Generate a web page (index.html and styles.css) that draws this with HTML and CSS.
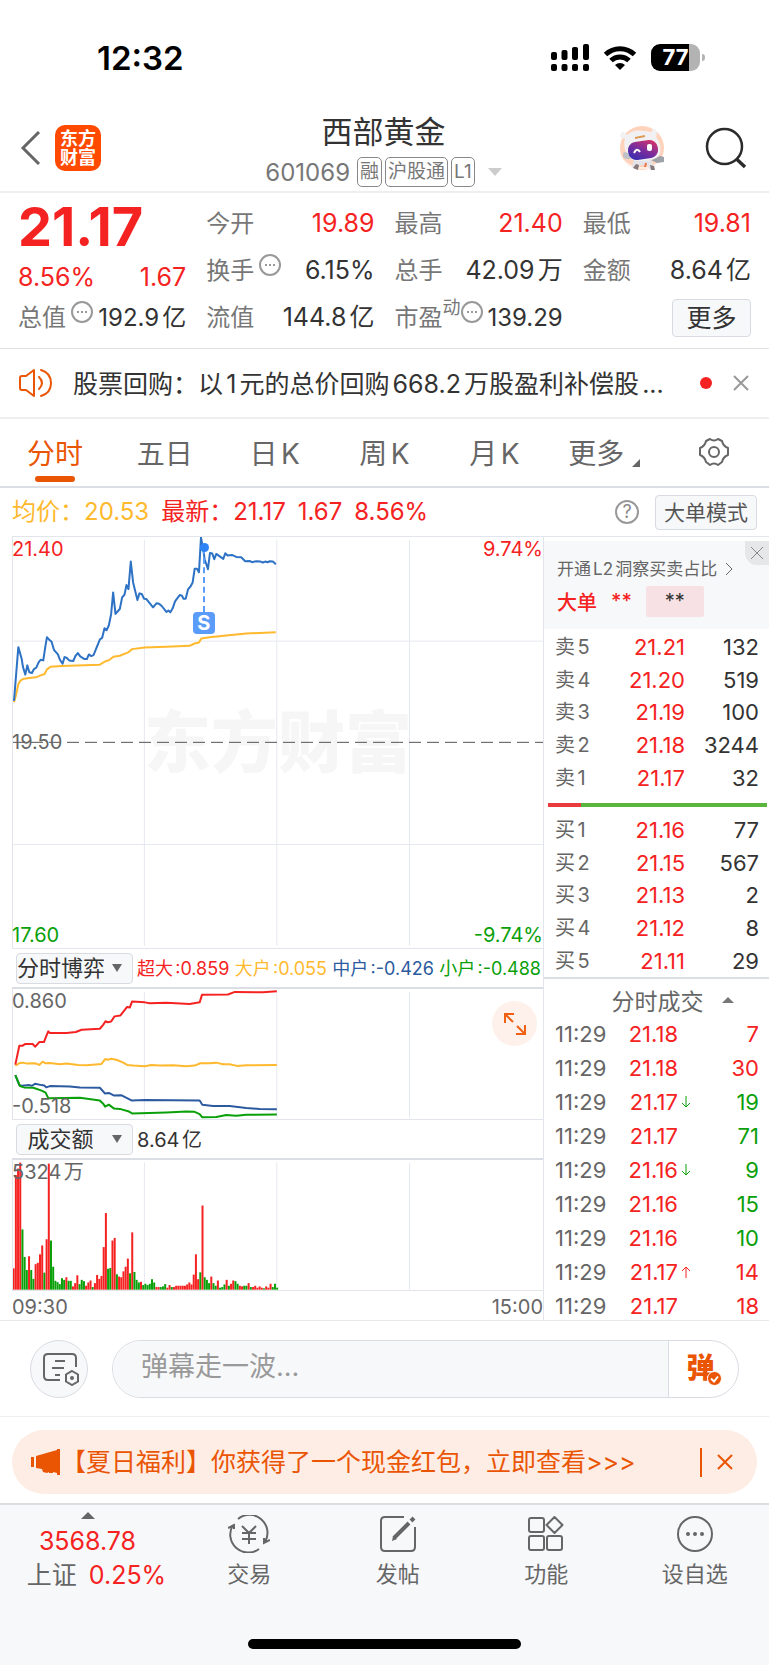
FILE: index.html
```html
<!doctype html>
<html lang="zh-CN">
  <head>
    <meta charset="UTF-8" />
    <meta name="viewport" content="width=device-width, initial-scale=1.0" />
    <title>西部黄金 601069</title>
    <link rel="stylesheet" href="styles.css">
  </head>
  <body>
    <div class="status-bar">
      <span class="clock">12:32</span>
      <div class="status-icons">
        <svg width="38" height="27" viewBox="0 0 38 27">
          <rect x="0" y="8" width="6" height="8" rx="2" />
          <rect x="10.500" y="6" width="6" height="10" rx="2" />
          <rect x="21" y="3" width="6" height="13" rx="2" />
          <rect x="32" y="0" width="6" height="16" rx="2" />
          <rect x="0" y="20" width="6" height="7" rx="2" />
          <rect x="10.500" y="20" width="6" height="7" rx="2" />
          <rect x="21" y="20" width="6" height="7" rx="2" />
          <rect x="32" y="20" width="6" height="7" rx="2" />
        </svg>
        <svg width="34" height="26" viewBox="0 0 34 26">
          <path d="M2.500 9.500a21 21 0 0 1 29 0M8 15.500a13 13 0 0 1 18 0" fill="none" stroke="#000" stroke-width="5" />
          <path d="M17 25l-5-5a7.500 7.500 0 0 1 10 0z" />
        </svg>
        <div class="battery"><span>77</span></div>
      </div>
    </div>

    <header class="header">
      <div class="header-left">
        <button class="icon-button" aria-label="返回">
          <svg width="22" height="36" viewBox="0 0 22 36"><path d="M19 2L3 18l16 16" fill="none" stroke="#666" stroke-width="3" /></svg>
        </button>
        <a class="logo" href="#">东方<br>财富</a>
      </div>
      <div class="header-title">
        <h1>西部黄金</h1>
        <div class="code">
          <span>601069</span>
          <span class="tag">融</span>
          <span class="tag">沪股通</span>
          <span class="tag">L1</span>
          <svg width="14" height="8" viewBox="0 0 14 8"><path d="M0 0h14L7 8z" fill="#ccc" /></svg>
        </div>
      </div>
      <div class="header-right">
        <button class="icon-button" aria-label="助手">
          <svg width="46" height="46" viewBox="0 0 46 46">
            <defs>
              <linearGradient id="visor" x1="0" y1="1" x2="1" y2="0">
                <stop offset="0" stop-color="#2a2fb5" />
                <stop offset="0.500" stop-color="#7b2c9c" />
                <stop offset="1" stop-color="#e8365f" />
              </linearGradient>
            </defs>
            <circle cx="23" cy="23" r="22" fill="#ffd3bb" />
            <path d="M3 33q8 9 20 9t20-9v11H3z" fill="#fff" opacity="0.600" />
            <path d="M15 34l-2 8 5 2 3-4h7l3 5 4-3-3-8z" fill="#e4e4e8" />
            <path d="M32 35l9-4 4 1v5l-7 1z" fill="#9da1a8" />
            <path d="M14 43l3-4 3 1-1 5zM31 40l4 1 1 4h-4z" fill="#85797b" />
            <path d="M1 12q1-6 4-5l3 3q6-6 17-4l8 1q0-4 3-3 3 4 1 8 6 7 4 17-4 7-17 7-14 1-17-9-3-7-1-13z" fill="#f1f1f4" />
            <path d="M5 27q-3 5 2 7l5 0-3-6z" fill="#bfc1c8" />
            <rect x="9" y="16" width="30" height="18" rx="8" fill="url(#visor)" transform="rotate(-8 24 25)" />
            <path d="M15 28q3-6 6-1" fill="none" stroke="#fff" stroke-width="2" />
            <rect x="28" y="19" width="5" height="7" rx="2" fill="#fff" />
            <path d="M16 12l10-2v2l-10 2z" fill="#dd9a54" />
            <path d="M27 38l-1 4" stroke="#e8764e" stroke-width="2" />
          </svg>
        </button>
        <button class="icon-button" aria-label="搜索">
          <svg width="42" height="42" viewBox="0 0 42 42" fill="none" stroke="#2b2b2b">
            <circle cx="19.500" cy="19.500" r="17.500" stroke-width="2.500" />
            <path d="M31.500 32l8.500 8" stroke-width="3.500" />
          </svg>
        </button>
      </div>
    </header>

    <section class="quote">
      <div class="quote-col">
        <strong class="price">21.17</strong>
        <div class="cell up"><span>8.56%</span><span>1.67</span></div>
        <div class="cell tight"><span class="name">总值<i class="dots"></i></span><span>192.9亿</span></div>
      </div>
      <div class="quote-col">
        <div class="cell"><span class="name">今开</span><span class="up">19.89</span></div>
        <div class="cell"><span class="name">换手 <i class="dots"></i></span><span>6.15%</span></div>
        <div class="cell"><span class="name">流值</span><span>144.8亿</span></div>
      </div>
      <div class="quote-col">
        <div class="cell"><span class="name">最高</span><span class="up">21.40</span></div>
        <div class="cell"><span class="name">总手</span><span>42.09万</span></div>
        <div class="cell tight"><span class="name">市盈<sup>动</sup><i class="dots"></i></span><span>139.29</span></div>
      </div>
      <div class="quote-col">
        <div class="cell"><span class="name">最低</span><span class="up">19.81</span></div>
        <div class="cell"><span class="name">金额</span><span>8.64亿</span></div>
        <div class="cell cell-end"><button class="more-button">更多</button></div>
      </div>
    </section>

    <section class="news">
      <svg width="34" height="30" viewBox="0 0 34 30" fill="none" stroke="#ea5504" stroke-width="2">
        <path d="M15 2v26L7 22H3q-2 0-2-2V10q0-2 2-2h4z" stroke-linejoin="round" />
        <path d="M20 9q6 6 0 12M22 2q10 3 10 13t-10 13" stroke-linecap="round" />
      </svg>
      <a class="news-text" href="#">股票回购：以1元的总价回购668.2万股盈利补偿股...</a>
      <span class="red-dot"></span>
      <button class="icon-button" aria-label="关闭">
        <svg width="16" height="16" viewBox="0 0 16 16"><path d="M1 1l14 14M15 1L1 15" stroke="#999" stroke-width="2" /></svg>
      </button>
    </section>

    <nav class="tabs">
      <button class="tab active">分时</button>
      <button class="tab">五日</button>
      <button class="tab">日K</button>
      <button class="tab">周K</button>
      <button class="tab">月K</button>
      <button class="tab tab-more">更多<svg width="8" height="8" viewBox="0 0 8 8"><path d="M8 0v8H0z" fill="#666" /></svg></button>
      <button class="tab" aria-label="设置">
        <svg width="32" height="32" viewBox="0 0 32 32" fill="none" stroke="#666" stroke-width="2">
          <path d="M12 3q4 3 8 0l4 2q1 5 6 7v7q-5 2-6 7l-4 3q-4-3-8 0l-4-3q-1-5-6-7v-7q5-2 6-7z" stroke-linejoin="round" />
          <circle cx="16" cy="16" r="5" />
        </svg>
      </button>
    </nav>

    <div class="latest">
      <span class="avg">均价：20.53</span>
      <span class="up">最新：21.17&ensp;1.67&ensp;8.56%</span>
      <button class="help" aria-label="帮助">?</button>
      <button class="mode-button">大单模式</button>
    </div>

    <main class="board">
      <div class="charts">
        <div class="plot plot-main">
          <span class="watermark">东方财富</span>
          <svg viewBox="39 18 1593 1239" preserveAspectRatio="none">
            <path class="grid" d="M434 26V1250M832 26V1250M1231 26V1250M39 332H1632M39 945H1632" />
            <path class="middle" d="M39 637H1632" />
            <polyline class="line orange" points="42,516 48,495 55,462 62,450 72,445 88,443 108,441 122,435 134,431 141,417 152,409 185,407 300,403 314,394 328,389 341,379 360,376 385,366 397,356 435,351 500,349 570,346 585,339 598,336 605,324 630,320 680,315 740,309 829,305" />
            <polyline class="line blue" points="42,512 55,350 65,385 69,410 76,433 82,405 88,426 96,428 102,416 109,412 116,396 122,388 130,390 136,350 141,320 148,328 155,334 162,358 174,372 180,388 188,400 194,380 200,382 208,390 220,392 227,376 234,368 241,378 254,386 261,386 267,372 274,377 281,374 300,327 307,322 314,293 320,299 327,285 334,250 340,185 347,250 360,235 367,200 374,192 380,163 386,175 393,92 400,155 413,208 419,188 426,190 433,204 440,205 460,230 470,218 478,219 486,226 500,244 506,240 512,245 519,233 526,212 540,193 547,195 551,204 558,204 565,176 572,168 579,155 585,114 592,114 598,124 604,20 610,50 615,85 625,115 631,66 638,68 644,85 650,69 671,84 677,67 684,74 697,72 710,78 725,79 737,91 750,90 757,94 770,91 783,92 790,95 797,92 804,94 811,91 820,92 829,100" />
          </svg>
          <div class="sell-mark">S</div>
          <span class="label top up">21.40</span>
          <span class="label top right up">9.74%</span>
          <span class="label center">19.50</span>
          <span class="label bottom down">17.60</span>
          <span class="label bottom right down">-9.74%</span>
        </div>

        <div class="indicator">
          <div class="picker">
            <select aria-label="指标一"><option>分时博弈</option></select>
          </div>
          <div class="legend">
            <span class="up">超大:0.859</span>
            <span class="avg">大户:0.055</span>
            <span class="mid">中户:-0.426</span>
            <span class="down">小户:-0.488</span>
          </div>
        </div>
        <div class="plot plot-game">
          <svg viewBox="39 140 1593 399" preserveAspectRatio="none">
            <path class="grid" d="M434 148V535M832 148V535M1231 148V535" />
            <polyline class="line orange" points="46,375 60,367 70,366 80,369 105,368 118,373 128,363 137,368 150,367 180,371 200,369 235,373 260,374 305,370 316,355 324,357 335,354 352,358 372,367 382,373 400,375 435,377 455,373 480,375 520,374 560,377 585,375 602,368 630,368 650,366 670,371 690,371 712,376 740,374 832,373" />
            <polyline class="line navy" points="46,404 58,435 66,437 88,435 96,437 105,431 125,435 133,436 139,442 150,438 210,439 240,442 300,443 316,461 327,459 343,467 364,466 395,482 435,481 600,482 608,495 640,499 690,499 740,505 780,508 832,509" />
            <polyline class="line green" points="46,404 60,438 72,442 100,443 125,452 137,458 145,475 240,474 300,482 310,492 316,501 327,495 343,507 360,508 385,515 397,522 500,519 560,516 585,517 600,524 608,534 650,533 680,527 710,529 740,526 832,525" />
            <polyline class="line red" points="46,372 58,314 68,314 75,309 98,309 106,317 118,303 132,303 139,285 145,270 150,275 200,275 228,272 245,265 300,262 310,250 317,239 324,242 334,240 344,224 362,221 372,208 382,195 390,197 397,178 435,181 450,184 500,182 570,186 600,181 607,158 685,157 706,149 790,150 832,147" />
          </svg>
          <span class="label top">0.860</span>
          <span class="label bottom">-0.518</span>
          <button class="expand" aria-label="放大">
            <svg width="24" height="24" viewBox="0 0 24 24" fill="none" stroke="#f06014" stroke-width="2"><path d="M2 11V2h9M2 2l8 8M22 13v9h-9M22 22l-8-8" /></svg>
          </button>
        </div>

        <div class="indicator">
          <div class="picker">
            <select aria-label="指标二"><option>成交额</option></select>
          </div>
          <div class="legend amount"><span>8.64亿</span></div>
        </div>
        <div class="plot plot-volume">
          <svg viewBox="39 654 1593 397" preserveAspectRatio="none">
            <path class="grid" d="M434 662V1050M832 662V1050M1231 662V1050" />
            <g id="volume"></g>
          </svg>
          <span class="label top">5324万</span>
        </div>
        <div class="time-axis"><span>09:30</span><span>15:00</span></div>
      </div>

      <aside class="panel">
        <div class="level2">
          <a href="#">开通L2洞察买卖占比
            <svg width="8" height="14" viewBox="0 0 8 14"><path d="M1 1l6 6-6 6" fill="none" stroke="#666" /></svg>
          </a>
          <div class="big-order"><b>大单</b><b>**</b><span>**</span></div>
          <button class="panel-close" aria-label="关闭">
            <svg width="14" height="14" viewBox="0 0 14 14"><path d="M1 1l12 12M13 1L1 13" stroke="#888" /></svg>
          </button>
        </div>
        <table class="orders">
          <tr><th>卖5</th><td>21.21</td><td>132</td></tr>
          <tr><th>卖4</th><td>21.20</td><td>519</td></tr>
          <tr><th>卖3</th><td>21.19</td><td>100</td></tr>
          <tr><th>卖2</th><td>21.18</td><td>3244</td></tr>
          <tr><th>卖1</th><td>21.17</td><td>32</td></tr>
        </table>
        <div class="ratio"></div>
        <table class="orders">
          <tr><th>买1</th><td>21.16</td><td>77</td></tr>
          <tr><th>买2</th><td>21.15</td><td>567</td></tr>
          <tr><th>买3</th><td>21.13</td><td>2</td></tr>
          <tr><th>买4</th><td>21.12</td><td>8</td></tr>
          <tr><th>买5</th><td>21.11</td><td>29</td></tr>
        </table>
        <button class="deals-title">分时成交
          <svg width="12" height="6" viewBox="0 0 12 6"><path d="M0 6h12L6 0z" fill="#777" /></svg>
        </button>
        <table class="deals">
          <tr><th>11:29</th><td>21.18</td><td></td><td class="up">7</td></tr>
          <tr><th>11:29</th><td>21.18</td><td></td><td class="up">30</td></tr>
          <tr><th>11:29</th><td>21.17</td><td class="down"><svg class="arrow" viewBox="0 0 10 12"><path d="M5 0v11M1 7l4 4 4-4" /></svg></td><td class="down">19</td></tr>
          <tr><th>11:29</th><td>21.17</td><td></td><td class="down">71</td></tr>
          <tr><th>11:29</th><td>21.16</td><td class="down"><svg class="arrow" viewBox="0 0 10 12"><path d="M5 0v11M1 7l4 4 4-4" /></svg></td><td class="down">9</td></tr>
          <tr><th>11:29</th><td>21.16</td><td></td><td class="down">15</td></tr>
          <tr><th>11:29</th><td>21.16</td><td></td><td class="down">10</td></tr>
          <tr><th>11:29</th><td>21.17</td><td class="up"><svg class="arrow" viewBox="0 0 10 12"><path d="M5 12V1M1 5l4-4 4 4" /></svg></td><td class="up">14</td></tr>
          <tr><th>11:29</th><td>21.17</td><td></td><td class="up">18</td></tr>
        </table>
      </aside>
    </main>

    <section class="comment">
      <button class="comment-settings" aria-label="弹幕设置">
        <svg width="38" height="34" viewBox="0 0 38 34" fill="none" stroke="#666" stroke-width="2">
          <path d="M18 28H6q-4 0-4-4V6q0-4 4-4h24q4 0 4 4v9" />
          <path d="M13 9h10M10 16h12M13 23h5" />
          <path d="M30 19l6 3.500v7L30 33l-6-3.500v-7z" />
          <circle cx="30" cy="26" r="1" />
        </svg>
      </button>
      <div class="comment-box">
        <input type="text" placeholder="弹幕走一波..." aria-label="弹幕">
        <button class="comment-toggle">弹
          <svg width="15" height="15" viewBox="0 0 15 15"><circle cx="7.500" cy="7.500" r="7" fill="#ea5504" stroke="#fff" /><path d="M4 7.500l3 3 4-5" fill="none" stroke="#fff" stroke-width="2" /></svg>
        </button>
      </div>
    </section>

    <div class="promo-wrap">
      <div class="promo">
        <svg width="30" height="26" viewBox="0 0 30 26" fill="#ea5504"><path d="M0 8h3v10H0zM5 7L26 1V0h3v26h-3v-2l-4-1v1h-4v-1l-2 1-4-1-1-3-6-1z" /></svg>
        <a href="#">【夏日福利】你获得了一个现金红包，立即查看&gt;&gt;&gt;</a>
        <button class="promo-close" aria-label="关闭">
          <svg width="16" height="16" viewBox="0 0 16 16"><path d="M1 1l14 14M15 1L1 15" stroke="#ea5504" stroke-width="2" /></svg>
        </button>
      </div>
    </div>

    <footer class="toolbar">
      <nav class="toolbar-items">
        <button class="index">
          <svg width="14" height="7" viewBox="0 0 14 7"><path d="M0 7h14L7 0z" fill="#666" /></svg>
          <span class="up">3568.78</span>
          <span class="index-change">上证<em class="up">0.25%</em></span>
        </button>
        <button class="tool">
          <svg width="42" height="38" viewBox="0 0 42 38">
            <path d="M10 4A18 18 0 0 1 37 27M31 34A18 18 0 0 1 5 10M0 13l6-3v4M42 25l-6 3v-5M14 11l7 7 7-7M21 18v11M14 18h14M14 24h14" />
          </svg>
          交易
        </button>
        <button class="tool">
          <svg width="38" height="38" viewBox="0 0 38 38">
            <path d="M25 2H6Q2 2 2 6v26q0 4 4 4h26q4 0 4-4V12" />
            <path d="M15 23L30 8M32 6l3-3" stroke-width="4" />
            <path d="M13 26l1-5 4 3z" fill="#666" stroke="none" />
          </svg>
          发帖
        </button>
        <button class="tool">
          <svg width="36" height="38" viewBox="0 0 36 38">
            <rect x="1" y="3" width="15" height="14" rx="2" />
            <rect x="1" y="21" width="15" height="14" rx="2" />
            <rect x="19" y="21" width="15" height="14" rx="2" />
            <path d="M26.500 2l8 8-8 8-8-8z" stroke-linejoin="round" />
          </svg>
          功能
        </button>
        <button class="tool">
          <svg width="38" height="38" viewBox="0 0 38 38">
            <circle cx="19" cy="19" r="17" />
            <g fill="#666" stroke="none"><circle cx="12" cy="19" r="2" /><circle cx="19" cy="19" r="2" /><circle cx="26" cy="19" r="2" /></g>
          </svg>
          设自选
        </button>
      </nav>
      <div class="home-indicator"></div>
    </footer>

    <script>
      // turnover per minute: r = up, g = down
      const volume =
        'r65 r350 r370 r388 g184 g100 g60 r102 g60 g33 r78 r82 r108 r135 g52 r154 r385 g150 g70 g27 ' +
        'g23 g17 g35 g30 r38 g27 g27 r10 r20 r44 g17 g30 g26 r12 r22 r28 g8 r20 r45 r33 ' +
        'r42 r130 r234 g64 g66 r150 r158 g47 r40 r38 r56 r70 r95 g50 r175 g54 g30 g22 r24 g14 ' +
        'g18 g14 g18 g32 g22 r8 r8 g8 g10 g17 r6 r14 g8 r8 r12 r12 r12 r12 r12 r16 ' +
        'r22 r16 r46 r108 r32 g53 r257 g38 g30 g20 r40 g20 g12 r28 g6 g8 g16 r30 g12 r18 ' +
        'r28 g26 g18 r12 r10 g12 g12 r20 g8 r8 r12 r6 r10 r6 g4 r10 r6 r18 g8 g18 g6';

      document.getElementById('volume').innerHTML = volume
        .split(' ')
        .map((bar, i) => {
          const height = Number(bar.slice(1));
          const color = bar[0] === 'r' ? '#f52222' : '#0aa00a';
          return `<rect x="${38 + i * 6.6}" y="${1050 - height}" width="6" height="${height}" fill="${color}" />`;
        })
        .join('');
    </script>
  </body>
</html>
```

FILE: styles.css
```css
* {
  box-sizing: border-box;
}
body {
  margin: 0;
  background: #fff;
  color: #333;
  font-family: Inter, "Noto Sans CJK SC", sans-serif;
  font-size: 24px;
  text-autospace: normal;
}
button,
input,
select {
  font: inherit;
  color: inherit;
  background: none;
  border: none;
  padding: 0;
  margin: 0;
}
button {
  cursor: pointer;
}
a {
  color: inherit;
  text-decoration: none;
}
svg {
  display: block;
  flex: none;
}
.up {
  color: #f52222;
}
.down {
  color: #0aa00a;
}
.avg {
  color: #ffb92e;
}
.mid {
  color: #2c5aa0;
}
.icon-button {
  display: flex;
}

.status-bar {
  display: flex;
  align-items: center;
  justify-content: space-between;
  height: 115px;
  padding: 0 69px 0 97px;
}
.clock {
  font-size: 33px;
  font-weight: 600;
  color: #000;
}
.status-icons {
  display: flex;
  align-items: center;
  gap: 14px;
}
.battery {
  position: relative;
  width: 49px;
  height: 27px;
  border-radius: 9px;
  background: linear-gradient(90deg, #000 78%, #b3b3b3 78%);
  color: #fff;
  font-size: 22px;
  font-weight: 700;
  line-height: 27px;
  text-align: center;
}
.battery::after {
  content: "";
  position: absolute;
  right: -5px;
  top: 10px;
  width: 3px;
  height: 7px;
  border-radius: 0 3px 3px 0;
  background: #b3b3b3;
}

.header {
  display: grid;
  grid-template-columns: 1fr auto 1fr;
  height: 78px;
  padding: 0 22px 0 20px;
  border-bottom: 2px solid #eee;
}
.header-left,
.header-right {
  display: flex;
  align-items: center;
  height: 66px;
}
.header-left {
  gap: 13px;
}
.header-right {
  justify-content: flex-end;
  gap: 40px;
}
.logo {
  width: 46px;
  height: 46px;
  padding: 4px 0;
  border-radius: 10px;
  background: #ff4a00;
  color: #fff;
  font-size: 18px;
  font-weight: 700;
  line-height: 19px;
  text-align: center;
}
.header-title h1 {
  margin: 0;
  font-size: 31px;
  font-weight: 400;
  line-height: 34px;
  text-align: center;
}
.code {
  display: flex;
  align-items: center;
  gap: 3px;
  height: 46px;
  color: #777;
}
.code > :first-child {
  margin-right: 4px;
}
.code svg {
  margin-left: 10px;
}
.tag {
  height: 30px;
  padding: 0 2px;
  border: 1px solid #888;
  border-radius: 5px;
  font-size: 19px;
  line-height: 28px;
}

.quote {
  display: grid;
  grid-template-columns: repeat(4, 1fr);
  gap: 20px;
  padding: 7px 18px;
  border-bottom: 1px solid #e2e2e4;
}
.quote-col {
  display: flex;
  flex-direction: column;
  min-width: 0;
}
.price {
  height: 54px;
  color: #f52222;
  font-size: 54px;
  font-weight: 700;
  line-height: 54px;
}
.cell {
  display: flex;
  align-items: center;
  justify-content: space-between;
  height: 47px;
  font-size: 25px;
  line-height: 47px;
  white-space: nowrap;
}
.cell.tight {
  font-size: 24px;
}
.price + .cell {
  height: 40px;
  margin-top: 3px;
}
.price ~ .cell:last-child {
  margin-top: -3px;
}
.cell-end {
  justify-content: flex-end;
}
.name {
  display: flex;
  color: #777;
  font-size: 24px;
}
.name sup {
  font-size: 18px;
  line-height: 28px;
}
.dots {
  display: flex;
  align-items: center;
  justify-content: center;
  width: 22px;
  height: 22px;
  margin: 7px 0 0 5px;
  border: 2px solid #999;
  border-radius: 50%;
}
sup + .dots {
  margin-left: 0;
}
.dots::before {
  content: "";
  width: 2px;
  height: 2px;
  background: #999;
  box-shadow: -4px 0 #999, 4px 0 #999;
}
.more-button {
  width: 79px;
  height: 38px;
  border: 1px solid #d9dbe2;
  border-radius: 4px;
  background: #f7f8fa;
  line-height: 34px;
}

.news {
  display: flex;
  align-items: center;
  height: 70px;
  padding: 0 20px 0 19px;
  border-bottom: 2px solid #eee;
}
.news-text {
  flex: 1;
  margin-left: 20px;
  padding-bottom: 2px;
  font-size: 25px;
  white-space: nowrap;
  overflow: hidden;
}
.red-dot {
  width: 12px;
  height: 12px;
  margin-right: 21px;
  border-radius: 50%;
  background: #f52222;
}

.tabs {
  display: flex;
  height: 69px;
  border-bottom: 2px solid #dddfe6;
}
.tab {
  position: relative;
  display: flex;
  flex: 1;
  align-items: center;
  justify-content: center;
  padding-bottom: 2px;
  color: #666;
  font-size: 28px;
}
.tab.active {
  color: #ea5504;
}
.tab.active::after {
  content: "";
  position: absolute;
  left: calc(50% - 20px);
  bottom: 4px;
  width: 40px;
  height: 6px;
  border-radius: 3px;
  background: #ea5504;
}
.tab-more svg {
  margin: 22px 0 0 8px;
}

.latest {
  display: flex;
  align-items: center;
  gap: 12px;
  height: 48px;
  padding: 0 12px;
  font-size: 24px;
  line-height: 46px;
}
.help {
  width: 24px;
  height: 24px;
  margin-left: auto;
  border: 2px solid #999;
  border-radius: 50%;
  color: #888;
  font-size: 18px;
  line-height: 20px;
}
.mode-button {
  width: 102px;
  height: 35px;
  margin-left: 4px;
  border: 1px solid #d9dbe2;
  border-radius: 4px;
  background: #f7f8fa;
  color: #555;
  font-size: 21px;
  line-height: 31px;
}

.board {
  display: flex;
  padding-left: 12px;
  border-bottom: 1px solid #e8e8e8;
}
.charts {
  flex: 1;
  min-width: 0;
  border-right: 1px solid #e3e5ec;
}
.plot {
  position: relative;
  border: 1px solid #e3e5ec;
  border-right: none;
}
.plot svg {
  position: relative;
  width: 100%;
  height: 100%;
}
.plot-main {
  height: 413px;
}
.plot-game,
.plot-volume {
  height: 133px;
  border-top: 2px solid #dcdee5;
}
.plot .expand svg {
  width: 24px;
  height: 24px;
}
.grid {
  fill: none;
  stroke: #e5e8ef;
  stroke-width: 1;
  vector-effect: non-scaling-stroke;
}
.middle {
  stroke: #555;
  stroke-width: 1;
  stroke-dasharray: 12 6;
  vector-effect: non-scaling-stroke;
}
.line {
  fill: none;
  stroke-width: 2;
  stroke-linejoin: round;
  vector-effect: non-scaling-stroke;
}
.line.blue {
  stroke: #2d72c4;
}
.line.navy {
  stroke: #2c5aa0;
}
.line.orange {
  stroke: #ffb92e;
}
.line.red {
  stroke: #f52222;
}
.line.green {
  stroke: #0aa00a;
}
.watermark {
  position: absolute;
  inset: 0;
  display: flex;
  align-items: center;
  justify-content: center;
  padding-bottom: 10px;
  color: #f6f6f7;
  font-size: 67px;
  font-weight: 900;
}
.label {
  position: absolute;
  left: -1px;
  color: #666;
  font-size: 20px;
  line-height: 26px;
}
.label.up {
  color: #f52222;
}
.label.down {
  color: #0aa00a;
}
.label.top {
  top: -1px;
}
.label.center {
  top: calc(50% - 14px);
}
.label.bottom {
  bottom: 0;
}
.label.right {
  left: auto;
  right: 0;
}
.sell-mark {
  position: absolute;
  left: 36%;
  top: 75px;
  width: 22px;
  height: 22px;
  margin-left: -11px;
  border-radius: 4px;
  background: #5a9cfa;
  color: #fff;
  font-size: 20px;
  font-weight: 700;
  line-height: 22px;
  text-align: center;
}
.sell-mark::before {
  content: "";
  position: absolute;
  left: 10px;
  bottom: 22px;
  height: 64px;
  border-left: 2px dashed #5a9cfa;
}
.sell-mark::after {
  content: "";
  position: absolute;
  left: 7px;
  top: -69px;
  width: 9px;
  height: 9px;
  border-radius: 50%;
  background: #2e83f5;
}
.indicator {
  display: flex;
  align-items: center;
  height: 38px;
  padding-left: 4px;
}
.picker {
  position: relative;
  flex: none;
  width: 117px;
  height: 31px;
}
.picker select {
  width: 100%;
  height: 100%;
  padding-right: 28px;
  border: 1px solid #d9dbe2;
  border-radius: 4px;
  background: #f7f8fa;
  font-size: 22px;
  appearance: none;
  text-align-last: center;
}
.picker::after {
  content: "";
  position: absolute;
  right: 11px;
  top: 11px;
  border: 5px solid transparent;
  border-top: 8px solid #666;
  border-bottom: none;
}
.legend {
  display: flex;
  flex: 1;
  justify-content: space-between;
  padding: 0 2px 2px 4px;
  font-size: 18px;
  white-space: nowrap;
}
.legend.amount {
  font-size: 20px;
}
.expand {
  position: absolute;
  right: 6px;
  top: 12px;
  display: flex;
  align-items: center;
  justify-content: center;
  width: 45px;
  height: 45px;
  border-radius: 50%;
  background: #fef1eb;
}
.time-axis {
  display: flex;
  justify-content: space-between;
  height: 29px;
  color: #666;
  font-size: 20px;
  line-height: 32px;
}

.panel {
  flex: none;
  width: 225px;
  border-top: 1px solid #e3e5ec;
}
.level2 {
  position: relative;
  height: 88px;
  margin-top: 4px;
  padding: 14px 0 0 13px;
  background: #f7f8fa;
}
.level2 a {
  display: flex;
  align-items: center;
  gap: 8px;
  color: #666;
  font-size: 17px;
  line-height: 28px;
}
.big-order {
  display: flex;
  align-items: center;
  height: 36px;
  color: #f52222;
  font-size: 20px;
}
.big-order b {
  margin-right: 14px;
  font-weight: 500;
}
.big-order span {
  width: 58px;
  height: 31px;
  border-radius: 2px;
  background: #f7e1e4;
  color: #333;
  line-height: 31px;
  text-align: center;
}
.panel-close {
  position: absolute;
  right: 0;
  top: 0;
  display: flex;
  align-items: center;
  justify-content: center;
  width: 24px;
  height: 24px;
  border-radius: 0 0 0 12px;
  background: #e6e7e9;
}
.orders,
.deals {
  width: 204px;
  margin-left: 11px;
  border-collapse: collapse;
  table-layout: fixed;
  font-size: 22px;
  line-height: 28px;
}
.orders {
  height: 163px;
  margin-top: 2px;
}
.orders th,
.orders td,
.deals th,
.deals td {
  padding: 0;
  font-weight: 400;
  text-align: right;
}
.orders th,
.deals th {
  color: #666;
  text-align: left;
}
.orders th {
  width: 52px;
  font-size: 20px;
}
.orders th + td {
  width: 78px;
  color: #f52222;
}
.ratio {
  height: 4px;
  margin: 9px 2px 7px 4px;
  background: linear-gradient(90deg, #e93b3b 15%, #5ab53c 15%);
}
.deals-title {
  display: flex;
  align-items: center;
  justify-content: center;
  gap: 18px;
  width: 100%;
  height: 40px;
  padding: 4px 0 0 32px;
  border-top: 2px solid #dcdee5;
  color: #666;
  font-size: 23px;
}
.deals {
  margin-bottom: -10px;
}
.deals tr {
  height: 34px;
}
.deals th {
  width: 64px;
}
.deals th + td {
  width: 59px;
  color: #f52222;
}
.deals td:nth-child(3) {
  width: 16px;
}
.arrow {
  width: 10px;
  height: 12px;
  margin-left: 3px;
  fill: none;
  stroke: currentColor;
  stroke-width: 1;
}

.comment {
  display: flex;
  align-items: center;
  gap: 24px;
  height: 96px;
  padding: 0 30px;
  border-bottom: 1px solid #eee;
}
.comment-settings {
  display: flex;
  align-items: center;
  justify-content: center;
  width: 58px;
  height: 58px;
  padding-left: 3px;
  border: 1px solid #dadce3;
  border-radius: 50%;
  background: #f7f8fa;
}
.comment-box {
  display: flex;
  flex: 1;
  height: 58px;
  border: 1px solid #dadce3;
  border-radius: 29px;
  overflow: hidden;
}
.comment-box input {
  flex: 1;
  min-width: 0;
  padding: 0 28px 4px;
  background: #f7f8fa;
  font-size: 27px;
  text-autospace: no-autospace;
}
.comment-box input::placeholder {
  color: #999;
}
.comment-toggle {
  position: relative;
  width: 70px;
  padding: 0 6px 6px 0;
  border-left: 1px solid #dadce3;
  color: #ea5504;
  font-size: 28px;
  font-weight: 900;
}
.comment-toggle svg {
  position: absolute;
  right: 16px;
  bottom: 11px;
}

.promo-wrap {
  padding: 13px 12px 9px;
}
.promo {
  display: flex;
  align-items: center;
  height: 64px;
  padding: 0 24px 0 19px;
  border-radius: 32px;
  background: #feede5;
  color: #ea5504;
  font-size: 25px;
  line-height: 60px;
}
.promo a {
  flex: 1;
  white-space: nowrap;
}
.promo-close {
  display: flex;
  align-items: center;
  height: 29px;
  padding-left: 15px;
  border-left: 2px solid #ea5504;
}

.toolbar {
  padding-bottom: 16px;
  border-top: 2px solid #dcdde0;
  background: #f7f8fa;
}
.toolbar-items {
  display: grid;
  grid-template-columns: 175px repeat(4, 1fr);
  height: 134px;
  color: #666;
}
.toolbar-items button {
  display: flex;
  flex-direction: column;
  align-items: center;
}
.index {
  padding-top: 7px;
  font-size: 25px;
  line-height: 34px;
}
.index svg {
  margin-bottom: 5px;
}
.index-change {
  display: flex;
  gap: 12px;
  padding-left: 18px;
}
.index em {
  font-style: normal;
}
.tool {
  gap: 5px;
  padding-top: 10px;
  font-size: 22px;
  line-height: 32px;
}
.tool svg {
  fill: none;
  stroke: #666;
  stroke-width: 2;
}
.home-indicator {
  width: 273px;
  height: 10px;
  margin: 0 auto;
  border-radius: 5px;
  background: #000;
}
```
